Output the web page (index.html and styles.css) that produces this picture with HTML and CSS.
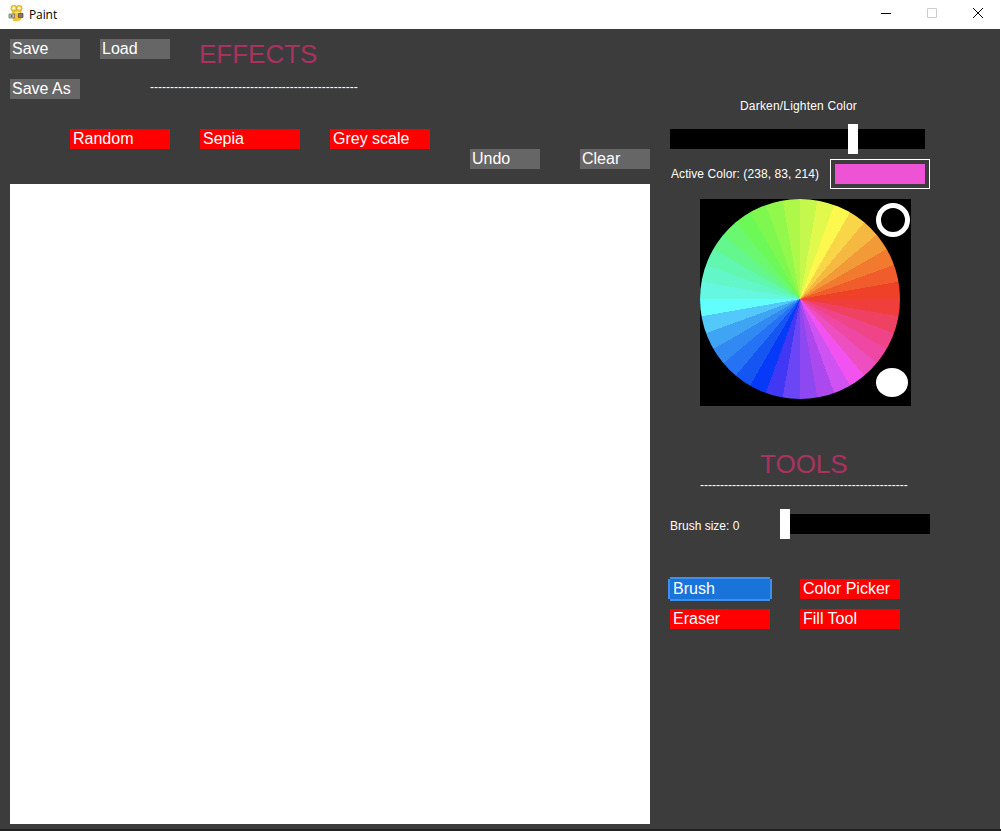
FILE: index.html
```html
<!DOCTYPE html>
<html lang="en">
<head>
  <meta charset="UTF-8" />
  <meta name="viewport" content="width=device-width, initial-scale=1.0"/>
  <title>Paint</title>
  <link rel="stylesheet" href="styles.css">
</head>
<body>
  <header class="titlebar">
    <svg class="app-icon" width="16" height="16" viewBox="0 0 16 16">
      <path d="M3.500 4h10v9c0 2-1.500 3-4 3H5c-.5-2-.5-4-.5-6z" fill="#ecc62e"/>
      <path d="M7 6.500h5V8c-2 1-4 .5-5-.5z" fill="#f8e27a"/>
      <circle cx="5.800" cy="3.200" r="3" fill="#f2d240" stroke="#a88c2a" stroke-width=".5"/>
      <circle cx="11.200" cy="3.200" r="3" fill="#f2d240" stroke="#a88c2a" stroke-width=".5"/>
      <circle cx="5.800" cy="3.200" r="1.400" fill="#fff8d0"/>
      <circle cx="11.200" cy="3.200" r="1.400" fill="#fff8d0"/>
      <path d="M1 9h5.500v4H1z" fill="#c8c8c4" stroke="#5c5c56" stroke-width=".7"/>
      <circle cx="3.600" cy="11" r="1" fill="#5c5c56"/>
      <path d="M10.500 8.500H15v4h-4.500z" fill="#94716c" stroke="#4a4444" stroke-width=".7"/>
    </svg>
    <span class="app-name">Paint</span>
    <div class="win-btns">
      <svg class="win-btn" width="46" height="29" viewBox="0 0 46 29"><path d="M18 13.500h10" stroke="#000"/></svg>
      <svg class="win-btn" width="46" height="29" viewBox="0 0 46 29"><path d="M18.500 8.500h9v9h-9z" fill="none" stroke="#ccc"/></svg>
      <svg class="win-btn" width="46" height="29" viewBox="0 0 46 29"><path d="M18 8l10 10M28 8L18 18" stroke="#000" fill="none"/></svg>
    </div>
  </header>

  <main class="app">
    <section class="left">
      <div class="row-file">
        <button class="btn grey">Save</button>
        <button class="btn grey">Load</button>
        <h2 class="heading effects-title">EFFECTS</h2>
      </div>
      <div class="row-saveas">
        <button class="btn grey">Save As</button>
        <div class="dashes effects-dashes">----------------------------------------------------</div>
      </div>
      <div class="row-effects">
        <button class="btn red wide">Random</button>
        <button class="btn red wide">Sepia</button>
        <button class="btn red wide">Grey scale</button>
        <button class="btn grey undo">Undo</button>
        <button class="btn grey clear">Clear</button>
      </div>
      <div class="canvas"></div>
    </section>

    <section class="right">
      <div class="shade-label">Darken/Lighten Color</div>
      <div class="slider shade-slider"><span class="thumb"></span></div>
      <div class="active-row">
        <span class="active-label">Active Color: (238, 83, 214)</span>
        <div class="swatch-box"><div class="swatch"></div></div>
      </div>
      <div class="wheel-box">
        <div class="wheel"></div>
        <span class="ring"></span>
        <span class="blob"></span>
      </div>
      <h2 class="heading tools-title">TOOLS</h2>
      <div class="dashes tools-dashes">----------------------------------------------------</div>
      <div class="brush-row">
        <span class="brush-label">Brush size: 0</span>
        <div class="slider brush-slider"><span class="thumb"></span></div>
      </div>
      <div class="tools">
        <button class="btn blue wide">Brush</button>
        <button class="btn red wide">Color Picker</button>
        <button class="btn red wide">Eraser</button>
        <button class="btn red wide">Fill Tool</button>
      </div>
    </section>
  </main>
  <div class="window-edge"></div>
</body>
</html>
```

FILE: styles.css
```css
* { box-sizing: border-box; }
body { margin: 0; width: 1001px; height: 831px; overflow: hidden; background: #3c3c3c; font-family: "Liberation Sans", Arial, sans-serif; color: #fff; }

.titlebar { height: 29px; background: #fff; display: flex; align-items: center; color: #000; }
.app-icon { margin: -3px 0 0 8px; }
.app-name { margin-left: 5px; font: 12px "Open Sans", sans-serif; letter-spacing: -.1px; }
.win-btns { margin-left: auto; display: flex; }
.win-btn { display: block; }

.app { display: flex; height: 800px; padding-left: 10px; border-right: 1px solid #fff; }
.left { width: 640px; }
.right { width: 280px; margin-left: 10px; }
.window-edge { height: 2px; background: #222; }

.btn { display: block; height: 20px; width: 70px; padding: 0 0 0 2px; margin: 0; border: 0; font: 16px/18px "Liberation Sans", Arial, sans-serif; color: #fff; text-align: left; }
.btn.wide { width: 100px; padding-left: 3px; }
.grey { background: #666; }
.red { background: #f00; }
.blue { background: #1a73d9; box-shadow: 0 -2px #3d8ff0, 0 2px #3d8ff0, -2px 0 #3d8ff0, 2px 0 #3d8ff0; }

.heading { margin: 0; font-size: 26px; font-weight: normal; line-height: 30px; color: #aa3260; }
.dashes { width: 208px; height: 14px; font-size: 12px; line-height: 14px; white-space: nowrap; overflow: hidden; }

.row-file { display: flex; gap: 20px; padding-top: 10px; height: 50px; }
.effects-title { margin: 0 0 0 9px; }
.row-saveas { display: flex; height: 50px; }
.effects-dashes { margin: 1px 0 0 70px; }
.row-effects { display: flex; gap: 30px; padding-left: 60px; height: 55px; }
.undo { margin: 20px 0 0 10px; }
.clear { margin: 20px 0 0 10px; }
.canvas { width: 640px; height: 640px; background: #fff; }

.shade-label { margin: 69px 0 0 80px; font-size: 12px; line-height: 16px; letter-spacing: .18px; }
.slider { background: #000; height: 20px; position: relative; }
.thumb { position: absolute; top: -5px; width: 10px; height: 30px; background: #fff; }
.shade-slider { width: 255px; margin: 15px 0 0 10px; }
.shade-slider .thumb { left: 178px; }

.active-row { display: flex; align-items: center; height: 30px; margin: 10px 0 0 11px; }
.active-label { font-size: 12px; width: 159px; letter-spacing: .07px; }
.swatch-box { width: 100px; height: 30px; border: 1px solid #fff; padding: 4px; }
.swatch { height: 20px; background: #ee53d6; }

.wheel-box { position: relative; width: 211px; height: 207px; margin: 10px 0 0 40px; background: #000; }
.wheel {
  width: 200px; height: 200px; border-radius: 50%;
  background: conic-gradient(
    #c4f84c 0 10deg, #e1f84c 0 20deg, #fdf84e 0 30deg, #f8d647 0 40deg, #f5b841 0 50deg, #f39a38 0 60deg,
    #f17a2f 0 70deg, #f05c2b 0 80deg, #ef4127 0 90deg, #ef3e3b 0 100deg, #ef4263 0 110deg, #ef4488 0 120deg,
    #ee47a4 0 130deg, #ee4fc0 0 140deg, #f253f0 0 150deg, #cf53f2 0 160deg, #ab48ee 0 170deg, #8d48f2 0 180deg,
    #6a46f5 0 190deg, #4038f4 0 200deg, #0739f8 0 210deg, #1555f2 0 220deg, #2572f5 0 230deg, #3289f2 0 240deg,
    #40a4f4 0 250deg, #52c8fb 0 260deg, #62feff 0 270deg, #66f7e0 0 280deg, #62f6c8 0 290deg, #62f7b0 0 300deg,
    #63f78e 0 310deg, #6af870 0 320deg, #6cf958 0 330deg, #7ef84e 0 340deg, #93f84c 0 350deg, #aef84a 0 360deg
  );
}
.ring { position: absolute; left: 176px; top: 4px; width: 34px; height: 34px; border: 5px solid #fff; border-radius: 50%; }
.blob { position: absolute; left: 176px; top: 169px; width: 32px; height: 29px; background: #fff; border-radius: 50%; }

.tools-title { margin: 43px 0 0 100px; }
.tools-dashes { margin: -1px 0 0 40px; }
.brush-row { display: flex; align-items: center; height: 30px; margin: 17px 0 0 10px; }
.brush-label { font-size: 12px; width: 110px; padding-top: 4px; }
.brush-slider { width: 150px; }
.brush-slider .thumb { left: 0; }
.tools { display: grid; grid-template-columns: 100px 100px; column-gap: 30px; row-gap: 10px; margin: 40px 0 0 10px; }
```
